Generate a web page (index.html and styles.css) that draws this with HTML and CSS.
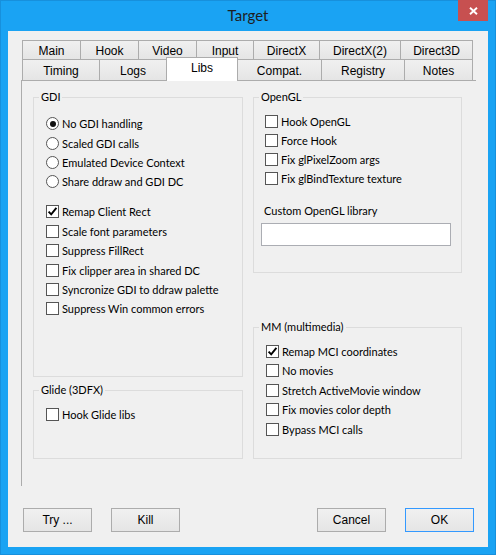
FILE: index.html
```html
<!DOCTYPE html>
<html>
<head>
<meta charset="utf-8">
<title>Target</title>
<link rel="stylesheet" href="styles.css">
</head>
<body>
<div class="window">
  <div class="titlebar">
    <span></span>
    <div class="title">Target</div>
    <div class="close"><svg width="9" height="8" viewBox="0 0 9 8"><path d="M1 0.8 L8 7.2 M8 0.8 L1 7.2" stroke="#fff" stroke-width="1.9" fill="none"/></svg></div>
  </div>
  <div class="client">
    <div class="tabs">
      <div class="tabrow row1">
        <div class="tab">Main</div>
        <div class="tab">Hook</div>
        <div class="tab">Video</div>
        <div class="tab">Input</div>
        <div class="tab">DirectX</div>
        <div class="tab">DirectX(2)</div>
        <div class="tab last">Direct3D</div>
      </div>
      <div class="tabrow row2">
        <div class="tab">Timing</div>
        <div class="tab">Logs</div>
        <div class="tab selected">Libs</div>
        <div class="tab">Compat.</div>
        <div class="tab">Registry</div>
        <div class="tab last">Notes</div>
      </div>
    </div>
    <div class="panel">
      <div class="col">
        <div class="group gdi">
          <div class="gtitle">GDI</div>
          <div class="opts radios">
            <div class="opt"><span class="radio on"></span>No GDI handling</div>
            <div class="opt"><span class="radio"></span>Scaled GDI calls</div>
            <div class="opt"><span class="radio"></span>Emulated Device Context</div>
            <div class="opt"><span class="radio"></span>Share ddraw and GDI DC</div>
          </div>
          <div class="opts checks">
            <div class="opt"><span class="check on"><svg width="11" height="11" viewBox="0 0 11 11"><path d="M1.6 5.6 L4.2 8.4 L9.4 1.8" stroke="#000" stroke-width="1.9" fill="none"/></svg></span>Remap Client Rect</div>
            <div class="opt"><span class="check"></span>Scale font parameters</div>
            <div class="opt"><span class="check"></span>Suppress FillRect</div>
            <div class="opt"><span class="check"></span>Fix clipper area in shared DC</div>
            <div class="opt"><span class="check"></span>Syncronize GDI to ddraw palette</div>
            <div class="opt"><span class="check"></span>Suppress Win common errors</div>
          </div>
        </div>
        <div class="group glide">
          <div class="gtitle">Glide (3DFX)</div>
          <div class="opts">
            <div class="opt"><span class="check"></span>Hook Glide libs</div>
          </div>
        </div>
      </div>
      <div class="col">
        <div class="group opengl">
          <div class="gtitle">OpenGL</div>
          <div class="opts">
            <div class="opt"><span class="check"></span>Hook OpenGL</div>
            <div class="opt"><span class="check"></span>Force Hook</div>
            <div class="opt"><span class="check"></span>Fix glPixelZoom args</div>
            <div class="opt"><span class="check"></span>Fix glBindTexture texture</div>
          </div>
          <div class="flabel">Custom OpenGL library</div>
          <div class="input"></div>
        </div>
        <div class="group mm">
          <div class="gtitle">MM (multimedia)</div>
          <div class="opts">
            <div class="opt"><span class="check on"><svg width="11" height="11" viewBox="0 0 11 11"><path d="M1.6 5.6 L4.2 8.4 L9.4 1.8" stroke="#000" stroke-width="1.9" fill="none"/></svg></span>Remap MCI coordinates</div>
            <div class="opt"><span class="check"></span>No movies</div>
            <div class="opt"><span class="check"></span>Stretch ActiveMovie window</div>
            <div class="opt"><span class="check"></span>Fix movies color depth</div>
            <div class="opt"><span class="check"></span>Bypass MCI calls</div>
          </div>
        </div>
      </div>
    </div>
    <div class="buttons">
      <div class="btn">Try ...</div>
      <div class="btn">Kill</div>
      <div class="btn push">Cancel</div>
      <div class="btn default">OK</div>
    </div>
  </div>
</div>
</body>
</html>
```
FILE: styles.css
```css
html, body {
  margin: 0;
  padding: 0;
}
body {
  width: 496px;
  height: 555px;
  overflow: hidden;
  background: #1aa3f3;
}
.window {
  width: 496px;
  height: 555px;
  box-sizing: border-box;
  background: #1aa3f3;
  box-shadow: inset 0 0 0 1px #1790dc;
}
.titlebar {
  height: 31px;
  display: grid;
  grid-template-columns: 1fr auto 1fr;
}
.title {
  font-family: Lato, "Liberation Sans", sans-serif;
  font-size: 15px;
  line-height: 20px;
  padding-top: 5px;
  color: #1e1e1e;
}
.close {
  justify-self: end;
  width: 30px;
  height: 21px;
  margin-right: 8px;
  background: #c75050;
  display: flex;
  align-items: center;
  justify-content: center;
}
.close svg { display: block; margin-top: 1px; }
.client {
  margin: 0 8px;
  height: 516px;
  box-sizing: border-box;
  background: #f0f0f0;
  padding-top: 9px;
  font-family: Lato, "Liberation Sans", sans-serif;
  font-size: 11px;
  color: #000;
}
.tabs {
  margin-left: 14px;
  width: 451px;
  font-family: "Liberation Sans", Arial, sans-serif;
  font-size: 12px;
}
.tabrow {
  display: grid;
}
.row1 {
  grid-template-columns: 58px 58px 58px 57px 66px 81px 73px;
  grid-template-rows: 19px;
}
.row2 {
  grid-template-columns: 77px 67px 71px 84px 83px 69px;
  grid-template-rows: 21px;
}
.tab {
  margin-right: -1px;
  box-sizing: border-box;
  border: 1px solid #acacac;
  border-bottom: none;
  background: linear-gradient(#f0f0f0, #e5e5e5);
  display: flex;
  align-items: center;
  justify-content: center;
  padding-top: 1px;
}
.tab.last { margin-right: 0; }
.tab.selected {
  position: relative;
  z-index: 2;
  background: #fff;
  height: 24px;
  margin-top: -2px;
  align-self: start;
  align-items: flex-start;
  padding-top: 2px;
  line-height: 16px;
}
.panel {
  margin-left: 13px;
  width: 455px;
  height: 406px;
  box-sizing: border-box;
  border-top: 1px solid #acacac;
  border-left: 1px solid #acacac;
  padding-left: 11px;
  display: grid;
  grid-template-columns: 210px 209px;
  column-gap: 10px;
  align-content: start;
}
.col {
  display: flex;
  flex-direction: column;
  padding-top: 16px;
}
.group {
  box-sizing: border-box;
  border: 1px solid #dcdcdc;
}
.gtitle {
  width: fit-content;
  margin: -9px 0 0 5px;
  padding: 0 2px;
  line-height: 16px;
  background: #f0f0f0;
}
.gdi { height: 280px; padding-left: 12px; }
.glide { height: 69px; margin-top: 13px; padding-left: 12px; }
.opengl { height: 176px; padding-left: 11px; }
.mm { height: 132px; margin-top: 54px; padding-left: 12px; }
.gdi .gtitle, .glide .gtitle, .mm .gtitle { margin-left: -7px; }
.opengl .gtitle { margin-left: -6px; }
.opts { display: flex; flex-direction: column; }
.opt {
  display: flex;
  align-items: center;
  height: 19.4px;
  white-space: nowrap;
}
.gdi .radios { margin-top: 9px; }
.gdi .checks { margin-top: 10.7px; }
.glide .opts { margin-top: 7.3px; }
.opengl .opts { margin-top: 7.15px; }
.opengl .opt { height: 19.1px; }
.mm .opts { margin-top: 6.25px; }
.mm .opt { height: 19.5px; }
.check, .radio {
  flex: none;
  width: 13px;
  height: 13px;
  box-sizing: border-box;
  border: 1px solid #555;
  background: #fff;
  margin-right: 3px;
  display: flex;
  align-items: center;
  justify-content: center;
}
.radio { border-radius: 50%; }
.radio.on::after {
  content: "";
  width: 6px;
  height: 6px;
  border-radius: 50%;
  background: #111;
}
.check svg { display: block; }
.flabel {
  margin-top: 14.15px;
  margin-left: -1px;
  line-height: 16px;
}
.input {
  margin-top: 4.3px;
  margin-left: -4px;
  width: 190px;
  height: 23px;
  box-sizing: border-box;
  border: 1px solid #abadb3;
  background: #fff;
}
.buttons {
  display: flex;
  margin: 22px 14px 0 15px;
  gap: 19px;
  font-family: "Liberation Sans", Arial, sans-serif;
  font-size: 12px;
}
.btn {
  width: 69px;
  height: 24px;
  box-sizing: border-box;
  border: 1px solid #acacac;
  background: linear-gradient(#f0f0f0, #e5e5e5);
  display: flex;
  align-items: center;
  justify-content: center;
}
.btn.push { margin-left: auto; }
.btn.default { border-color: #3399ff; }
```
